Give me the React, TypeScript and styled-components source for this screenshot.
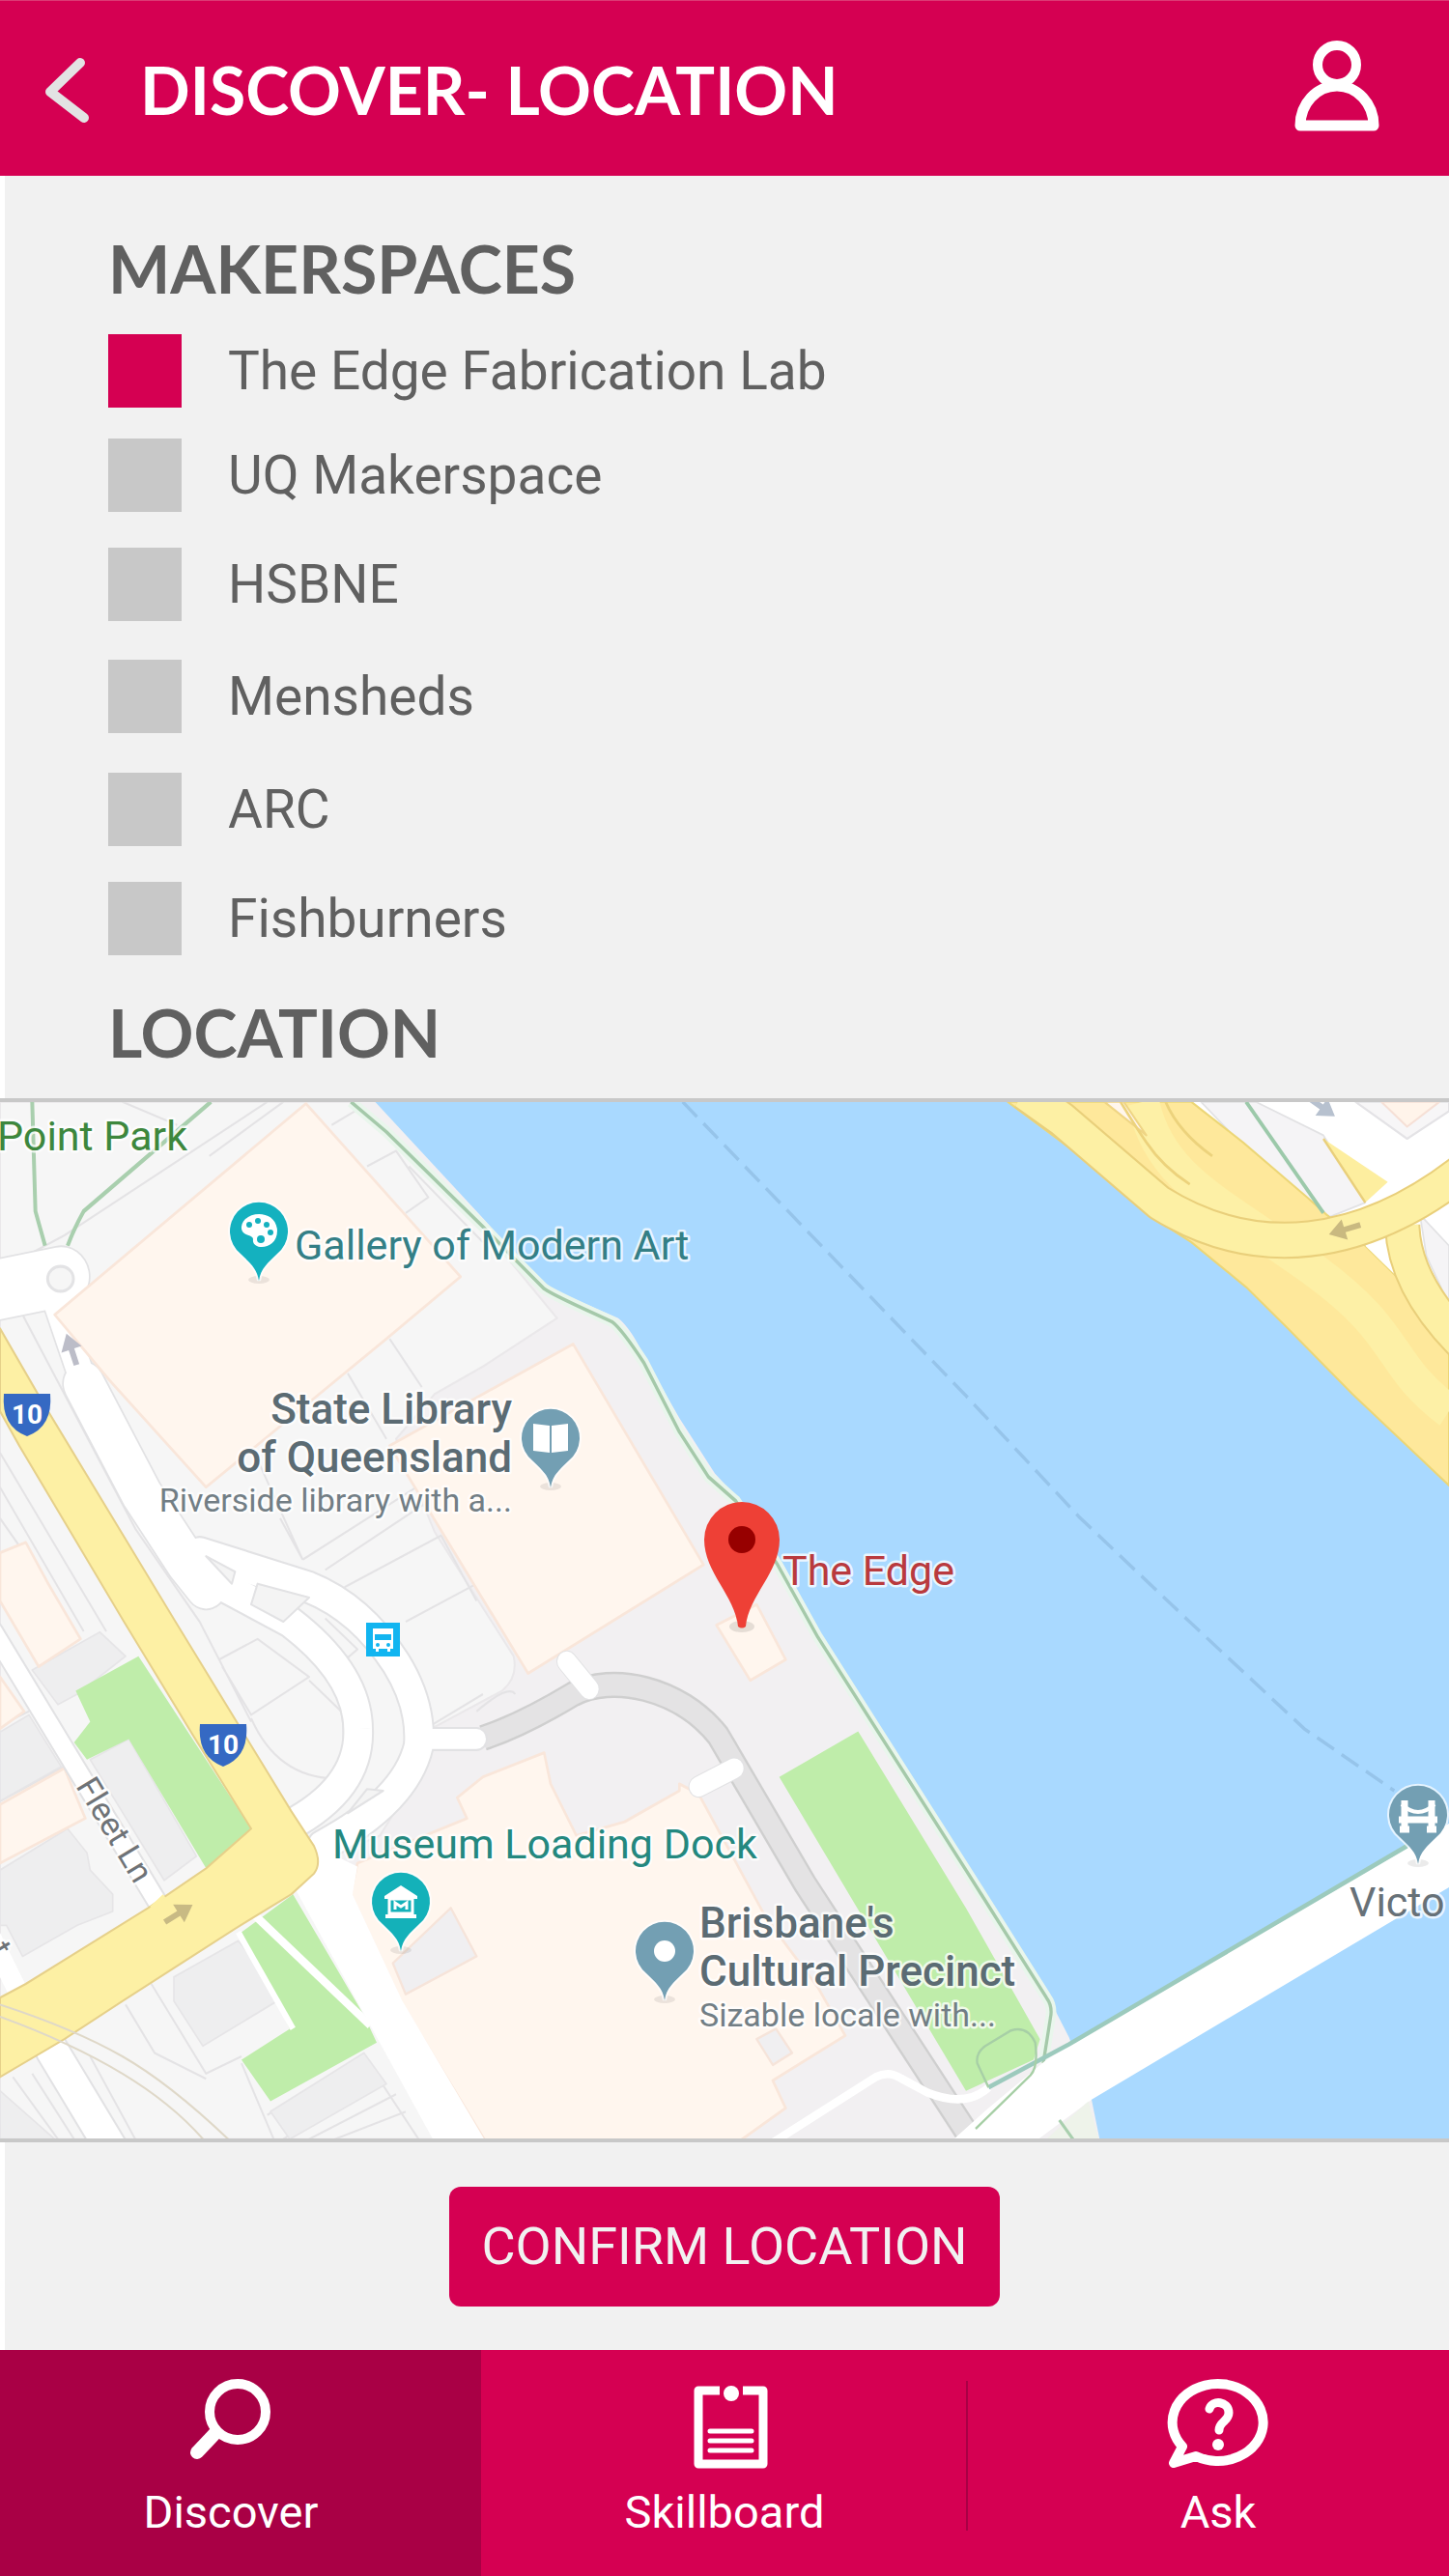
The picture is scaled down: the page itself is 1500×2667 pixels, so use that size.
import React, { useState } from "react";
import styled, { createGlobalStyle } from "styled-components";

const pink = "#d50052";
const darkPink = "#a90045";
const ink = "#606060";
const panel = "#f1f1f1";
const rule = "#c8c8c8";

const GlobalStyle = createGlobalStyle`
  *, *::before, *::after { box-sizing: border-box; }
  body { margin: 0; background: ${panel}; font-family: Roboto, "Liberation Sans", sans-serif; }
`;

const Page = styled.div`
  display: flex;
  flex-direction: column;
  min-height: 100vh;
`;

const Header = styled.header`
  display: flex;
  align-items: center;
  height: 182px;
  padding: 2px 68px 0 38px;
  border-top: 1px solid #dc3a75;
  background: ${pink};
`;

const IconButton = styled.button`
  display: flex;
  padding: 0;
  border: 0;
  background: none;
  cursor: pointer;
`;

const Title = styled.h1`
  flex: 1;
  margin: 0 0 0 43px;
  color: #fff;
  font: 700 68px/80px Lato, "Liberation Sans", sans-serif;
`;

const Section = styled.section`
  border-left: 5px solid #fff;
  background: ${panel};
`;

const Choices = styled(Section)`
  padding: 56px 107px 28px;
`;

const Heading = styled.h2`
  margin: 0;
  color: ${ink};
  font: 700 68px/80px Lato, "Liberation Sans", sans-serif;
`;

const SpaceList = styled.ul`
  display: grid;
  grid-template-rows: 108px 113px 116px 117px 113px 76px;
  align-items: start;
  margin: 28px 0 40px;
  padding: 0;
  list-style: none;
`;

const SpaceLabel = styled.label`
  display: flex;
  align-items: center;
  gap: 48px;
  height: 76px;
  color: ${ink};
  font-size: 55px;
  line-height: 64px;
  cursor: pointer;
`;

const Tick = styled.input`
  appearance: none;
  width: 76px;
  height: 76px;
  margin: 0;
  background: ${rule};
  cursor: pointer;
  &:checked { background: ${pink}; }
`;

const MapFrame = styled.figure`
  margin: 0;
  border: solid ${rule};
  border-width: 4px 0;
  background: #f6f6f6;
  overflow: hidden;
  svg { display: block; width: 100%; height: auto; }
`;

const MapText = styled.text<{ $tone: string; $size?: number; $strong?: boolean }>`
  fill: ${(p) => p.$tone};
  font-family: Roboto, "Liberation Sans", sans-serif;
  font-size: ${(p) => p.$size ?? (p.$strong ? 44 : 43)}px;
  font-weight: ${(p) => (p.$strong ? 500 : 400)};
  stroke: #ffffff;
  stroke-opacity: 0.75;
  stroke-width: 5px;
  stroke-linejoin: round;
  paint-order: stroke;
`;

const ShieldText = styled.text`
  fill: #fff;
  font: 700 28px Roboto, "Liberation Sans", sans-serif;
  text-anchor: middle;
`;

const Actions = styled(Section)`
  display: flex;
  flex: 1;
  justify-content: center;
  align-items: flex-start;
  padding: 46px 5px 44px 0;
`;

const Confirm = styled.button`
  width: 570px;
  height: 124px;
  padding: 0;
  border: 0;
  border-radius: 12px;
  background: ${pink};
  color: ${panel};
  font: 400 54px/64px Roboto, "Liberation Sans", sans-serif;
  cursor: pointer;
`;

const TabBar = styled.nav`
  display: grid;
  grid-template-columns: 498fr 504fr 498fr;
  height: 234px;
  background: ${pink};
`;

const Tab = styled.a<{ $active?: boolean; $side?: "left" | "right" }>`
  position: relative;
  display: flex;
  flex-direction: column;
  align-items: center;
  gap: 12px;
  padding: 24px ${(p) => (p.$side === "left" ? 20 : 0)}px 0 ${(p) => (p.$side === "right" ? 20 : 0)}px;
  background: ${(p) => (p.$active ? darkPink : "transparent")};
  color: #fff;
  font-size: 47px;
  line-height: 56px;
  text-decoration: none;
  &:nth-child(2)::after {
    content: "";
    position: absolute;
    top: 32px;
    right: 0;
    width: 2px;
    height: 155px;
    background: ${darkPink};
  }
`;

const line = { fill: "none", stroke: "#fff", strokeLinecap: "round", strokeLinejoin: "round" } as const;

const BackIcon = () => (
  <svg width="64" height="80" viewBox="0 0 64 80" aria-hidden="true">
    <path d="M45 12 14 42l35 27" {...line} stroke="#e3e3e3" strokeWidth="10" />
  </svg>
);

const UserIcon = () => (
  <svg width="96" height="104" viewBox="0 0 96 104" aria-hidden="true">
    <circle cx="48" cy="26" r="20" {...line} strokeWidth="10" />
    <path d="M10 89A38 41 0 0 1 86 89Z" {...line} strokeWidth="11" />
  </svg>
);

const SearchIcon = () => (
  <svg width="104" height="104" viewBox="0 0 104 104" aria-hidden="true">
    <circle cx="59" cy="40" r="29" {...line} strokeWidth="10" />
    <path d="M35 63 17 82" {...line} strokeWidth="14" />
  </svg>
);

const BoardIcon = () => (
  <svg width="104" height="104" viewBox="0 0 104 104" aria-hidden="true">
    <path d="M47 18H25V94H92V18H71" {...line} strokeLinecap="butt" strokeWidth="9" />
    <circle cx="59" cy="21" r="8" fill="#fff" />
    <path d="M37 60H80M37 70H80M37 80H80" {...line} strokeWidth="5" />
  </svg>
);

const AskIcon = () => (
  <svg width="104" height="104" viewBox="0 0 104 104" overflow="visible" aria-hidden="true">
    <path d="M15 76A47 40 0 1 1 29 86L6 93Z" {...line} strokeWidth="10" />
    <path d="M43 37C46 27 63 29 63 41 63 50 53 50 53 59" {...line} strokeWidth="9" />
    <circle cx="52" cy="74" r="6" fill="#fff" />
  </svg>
);

const Pin = ({ x, y, tone, children }: { x: number; y: number; tone: string; children: React.ReactNode }) => (
  <g transform={`translate(${x} ${y})`}>
    <ellipse cy="50" rx="11" ry="4" fill="#000" opacity=".08" />
    <path
      d="M0 51C-2 38-9 33-19 23A30 30 0 1 1 19 23C9 33 2 38 0 51Z"
      fill={tone}
      stroke="#fff"
      strokeOpacity=".7"
      strokeWidth="4"
      paintOrder="stroke"
    />
    {children}
  </g>
);

const Shield = ({ x, y }: { x: number; y: number }) => (
  <g transform={`translate(${x} ${y})`}>
    <path d="M-24 0H24Q27 34 0 44-27 34-24 0Z" fill="#3569c3" />
    <ShieldText y="31">10</ShieldText>
  </g>
);

const Arrow = ({ x, y, turn, tone }: { x: number; y: number; turn: number; tone: string }) => (
  <path
    d="M-17 0 0-11V-3H17V3H0V11Z"
    fill={tone}
    transform={`translate(${x} ${y}) rotate(${turn})`}
  />
);

const COAST =
  "M1090 33 1200 120 1500 395 1605 495 1690 575Q1720 595 1900 670 1930 690 2000 790L2110 990 2200 1120 2285 1190 2415 1375 2540 1585 3000 2260 3250 2630Q3270 2655 3262 2690L3240 2820";

const HIGHWAY =
  "M3130 33 3370 200 3600 380 3700 440 3870 570 4000 690 4200 880 4500 1145V740L4360 560 4240 450 4120 360 4060 310 3860 150 3700 33Z";

const YELLOW_ROAD =
  "M0 690 130 900 545 1540 905 2090 975 2190Q1000 2240 975 2270L905 2330 730 2430 380 2640 200 2750 0 2860V2630L80 2590 460 2370 640 2255 780 2140 600 1870 385 1540 60 1030 0 930Z";

const Ground = () => (
  <g transform="translate(0 -12) scale(.33333 .35714)" fill="none" strokeLinejoin="round">
    <path d="M0 33H4500V3040H0Z" fill="#f2f0f2" />
    <path
      d="M0 33H1100L1500 400 1730 660 1500 800 1350 880 1230 1010 1350 1280 1595 1640Q1610 1700 1560 1740L1340 1850V1920L1180 2160 1000 2230 1350 3040H0Z"
      fill="#f6f6f6"
      stroke="#eae8ea"
      strokeWidth="6"
    />
    {/* river */}
    <path
      d="M1165 33 1500 370 1615 490 1700 570 1920 660Q1960 690 2000 770L2110 950 2220 1110 2310 1200 2430 1370 2550 1575 3005 2255 3262 2640 3320 2745 3390 2925 3415 3040H4500V33Z"
      fill="#a9d9ff"
    />
    <path d="M2120 33 3000 885 3350 1235 3700 1545 4050 1850 4330 2030" stroke="#96c4ea" strokeWidth="10" strokeDasharray="62 28" />
    {/* parcel boundaries */}
    <path
      d="M380 33 550 100M0 520 200 420 830 33M650 190 880 33M1140 220 1230 175 1330 310 1260 355M1030 100 1120 50M1270 220 1500 440M1210 720 1310 860M1080 820 1200 1010M790 1050 940 1360M940 1360 1310 1140M1010 1390 1380 1160M1070 1440 1370 1290 1480 1480M870 1240 940 1360M1260 1540 1500 1420M70 650 420 1270 620 1540 780 1830M0 1050 330 1568M0 1150 260 1568M0 1240 180 1480M0 1840 90 1800M0 2060 200 1960M680 1650 800 1590 960 1700 780 1810 690 1670M780 1820Q860 1990 1040 1995 1080 1900 1060 1800L960 1710M900 1550 1060 1660 1110 1620 1010 1530M800 1430 780 1490 900 1568M470 2590 640 2850 750 2800M390 2650 480 2790 640 2865M40 2860 180 3040M100 2850 230 3040M280 2800 420 3040M750 2820 850 3040M830 2970 1130 2800 1300 3040M880 3040 1180 2860M960 3040 1230 2910M1040 3040 1260 2960M1600 1750Q1580 1720 1480 1800M1340 1840 1500 1750"
      stroke="#e4e3e5"
      strokeWidth="6"
    />
    {/* grey buildings */}
    <path
      d="M100 1680 310 1570 390 1640 240 1750 180 1780ZM0 1860 90 1810 190 1960 0 2060ZM0 2260 210 2140 270 2210 280 2260 350 2330 350 2380 240 2420 70 2510 20 2420 0 2420ZM280 1940 400 1880 610 2220 510 2290ZM540 2570 740 2465 850 2590 860 2640 630 2770 540 2640ZM0 2900 170 3040H0ZM840 2960 1130 2790 1200 2880 900 3040Z"
      fill="#eeeeef"
      stroke="#e6e5e7"
      strokeWidth="5"
    />
    {/* peach buildings */}
    <path
      d="M1780 735 2185 1375 1640 1690 1210 1030 1500 880ZM2225 1550 2330 1710 2440 1650 2350 1490ZM0 1340 80 1310 150 1430 250 1590 120 1670 0 1480ZM0 1700 75 1800 0 1850ZM0 2070 200 1965 265 2110 0 2240ZM1420 2050 1500 1990 1690 1920 1710 2010 1790 2160 1940 2120 2110 2030 2110 2010 2170 2040 2380 2400 2540 2600 2625 2740 2400 2870 2440 2950 2290 3050H1510L1250 2650 1090 2330 1110 2240 1450 2110Z"
      fill="#fff6ee"
      stroke="#f9e6da"
      strokeWidth="8"
    />
    <path d="M1220 2530 1400 2370 1480 2510 1260 2620ZM2350 2750 2410 2720 2460 2790 2400 2825Z" fill="#f0eff1" stroke="#f6e4da" strokeWidth="7" />
    {/* parks */}
    <path
      d="M235 1740 430 1640 780 2140 640 2255 400 1880 270 1940 230 1890 280 1830ZM750 2440 910 2330 1130 2680 1170 2760 840 2930 750 2810 900 2720ZM2420 1990 2665 1858 3000 2370 3230 2750 3210 2810 3000 2900Z"
      fill="#bfedaa"
    />
    <path d="M740 2440 910 2720" stroke="#fff" strokeWidth="18" />
    <path d="M790 2390 1150 2710" stroke="#fff" strokeWidth="24" />
    {/* riverside walk */}
    <path d={COAST} stroke="#e9f6ec" strokeWidth="32" />
    <path d={COAST} stroke="#a5c9aa" strokeWidth="10" />
    <path d="M100 33 110 350 140 450M655 33 260 350Q230 400 210 450" stroke="#a9cfae" strokeWidth="12" />
    {/* service road */}
    <path d="M1500 1877Q1620 1840 1780 1750C1900 1690 2110 1730 2230 1870L2500 2300 3030 3060" stroke="#cfcfcf" strokeWidth="76" />
    <path d="M1500 1877Q1620 1840 1780 1750C1900 1690 2110 1730 2230 1870L2500 2300 3030 3060" stroke="#e4e3e4" strokeWidth="62" />
    {/* local streets */}
    <g stroke="#e2e2e4" strokeLinecap="round">
      <path d="M-20 580 190 540" strokeWidth="182" />
      <path d="M170 600 250 820" strokeWidth="90" />
      <path d="M260 850 440 1170 580 1370 640 1440" strokeWidth="134" />
      <path d="M620 1400 900 1540Q1110 1690 1112 1850 1120 2020 900 2130" strokeWidth="98" />
      <path d="M620 1340 960 1440Q1120 1500 1230 1660 1310 1780 1300 1900 1260 2060 1000 2190" strokeWidth="98" />
      <path d="M1320 1880H1480" strokeWidth="70" />
      <path d="M-20 1570 500 2370" strokeWidth="66" />
      <path d="M1760 1655 1830 1735M2170 2018 2280 1965" strokeWidth="64" />
      <path d="M160 2780 360 3090" strokeWidth="108" />
    </g>
    <g stroke="#fff" strokeLinecap="round">
      <path d="M-20 580 190 540" strokeWidth="172" />
      <path d="M170 600 250 820" strokeWidth="80" />
      <path d="M260 850 440 1170 580 1370 640 1440" strokeWidth="124" />
      <path d="M620 1400 900 1540Q1110 1690 1112 1850 1120 2020 900 2130" strokeWidth="86" />
      <path d="M620 1340 960 1440Q1120 1500 1230 1660 1310 1780 1300 1900 1260 2060 1000 2190" strokeWidth="86" />
      <path d="M1320 1880H1480" strokeWidth="58" />
      <path d="M-20 1570 500 2370" strokeWidth="54" />
      <path d="M1760 1655 1830 1735M2170 2018 2280 1965" strokeWidth="58" />
      <path d="M160 2780 360 3090" strokeWidth="96" />
      <path d="M-40 2430 60 2620" strokeWidth="60" />
    </g>
    <path d="M950 38 1430 540 1200 720 640 1150 340 840 170 650Z" fill="#fff6ee" stroke="#f9e6da" strokeWidth="8" />
    <path d="M640 1350 730 1395 720 1430ZM800 1430 960 1470 880 1540 780 1490ZM1140 2025 1190 2030 1080 2095Z" fill="#f4f4f4" stroke="#e2e2e4" strokeWidth="6" />
    <ellipse cx="188" cy="546" rx="40" ry="36" fill="#f6f6f6" stroke="#e3e3e5" strokeWidth="9" />
    <path d="M920 2320 1000 2200 1110 2250 1095 2330 1250 2640 1510 3050H1350Z" fill="#fff" />
    <path d={YELLOW_ROAD} fill="#fdf0a4" stroke="#e6d08a" strokeWidth="6" />
    <path d="M470 2370 510 2335" stroke="#fdf0a4" strokeWidth="12" />
    <path d="M0 2650Q230 2720 380 2800T720 3050M0 2685Q220 2760 380 2850T640 3050" stroke="#dfd8c8" strokeWidth="6" />
    {/* bridge and quay */}
    <path d="M2400 3050 2720 2860Q2760 2840 2800 2865L2880 2905Q3000 2950 3070 2890" stroke="#fff" strokeWidth="24" />
    <path d="M2950 3050 3070 2950 3250 2810 3320 2770 4500 2125V2310L3390 2925 3210 3050Z" fill="#fff" />
    <path d="M3070 2890 3320 2765 4370 2190" stroke="#9ccabd" strokeWidth="13" />
    <path d="M3070 2890 3035 2820Q3030 2790 3060 2770L3140 2725Q3190 2710 3215 2760 3225 2830 3200 2855L3030 3010" stroke="#a7cfa6" strokeWidth="7" />
    <path d="M3250 3040 3380 2930 3415 3050Z" fill="#eef3ea" />
    <path d="M3290 2985 3340 3050" stroke="#a9cfae" strokeWidth="9" />
    {/* expressway */}
    <path d="M3690 33H4500V840L4360 560 4240 420 4100 350Z" fill="#fff" />
    <path d="M3730 33H3900L4110 130 4240 325 4120 370 3860 160ZM4410 360 4500 450V620L4430 480Z" fill="#f5f4f6" stroke="#e2e2e4" strokeWidth="5" />
    <path d="M4210 33 4370 140 4500 60V33Z" fill="#f7f6f7" stroke="#e4e3e6" strokeWidth="6" />
    <path d="M4290 33 4370 105 4470 33Z" fill="#fff4ea" stroke="#f6e0d6" strokeWidth="6" />
    <path d={HIGHWAY} fill="#fee89b" stroke="#ecd677" strokeWidth="6" />
    <path d="M3550 33C3600 260 3800 330 4080 520S4300 790 4500 930" stroke="#fdf0a6" strokeWidth="100" />
    <path d="M3430 33 3560 130 3490 33Z" fill="#fff6ec" stroke="#efd585" strokeWidth="6" />
    <path d="M3480 33Q3530 110 3560 150 3610 220 3695 272M3620 33Q3660 120 3765 190" stroke="#ecd27c" strokeWidth="8" />
    <path d="M4110 140 4310 265 4240 325Z" fill="#fdee9f" />
    <path d="M4110 140 4240 325" stroke="#e9cf7b" strokeWidth="7" />
    <path d="M3870 33 4110 355" stroke="#9cc9aa" strokeWidth="11" />
    <path d="M4240 450 4300 415 4350 550Z" fill="#fff" />
    <path d="M4355 390Q4360 560 4540 730" stroke="#e9cf7b" strokeWidth="112" />
    <path d="M4355 390Q4360 560 4540 730" stroke="#fdf0a4" strokeWidth="100" />
    <path d="M3180 5 3300 85 3600 325C3900 500 4230 460 4540 235" stroke="#e9cf7b" strokeWidth="108" />
    <path d="M3180 5 3300 85 3600 325C3900 500 4230 460 4540 235" stroke="#fdf0a4" strokeWidth="96" />
  </g>
);

const LocationMap = () => (
  <svg viewBox="0 0 1500 1073" role="img" aria-label="Map around The Edge, Brisbane">
    <Ground />
    <Arrow x={74} y={256} turn={72} tone="#bcbdc8" />
    <Arrow x={1392} y={132} turn={-17} tone="#c9b980" />
    <Arrow x={185} y={840} turn={148} tone="#c8ba84" />
    <Arrow x={1368} y={5} turn={215} tone="#b7c1cf" />
    <Shield x={28} y={302} />
    <Shield x={231} y={644} />

    <g transform="translate(379 539)">
      <rect width="35" height="35" fill="#12b5f0" />
      <path d="M7 6H28V27H25V30H22V27H13V30H10V27H7Z" fill="#fff" />
      <path d="M9 12H26V18H9Z" fill="#12b5f0" />
      <circle cx="12" cy="23" r="2" fill="#12b5f0" />
      <circle cx="23" cy="23" r="2" fill="#12b5f0" />
    </g>

    <Pin x={268} y={134} tone="#14b1bf">
      <path d="M-18-5C-16-22 18-24 19-1 19 20-8 20-6 8-6 3-19 5-18-5Z" fill="#fff" />
      <g fill="#14b1bf">
        <circle cx="-10" cy="-7" r="3" />
        <circle cx="-1" cy="-11" r="3" />
        <circle cx="8" cy="-7" r="3" />
        <circle cx="12" cy="1" r="3" />
        <circle cx="2" cy="8" r="4" />
      </g>
    </Pin>
    <Pin x={570} y={348} tone="#739fb3">
      <path d="M-18-15-1-13V15L-18 13ZM18-15 1-13V15L18 13Z" fill="#fff" />
    </Pin>
    <Pin x={415} y={828} tone="#14b1b9">
      <path d="M-17-6 0-17 17-6V-3H-17ZM-16 13H16V17H-16Z" fill="#fff" />
      <path d="M-12-3H12V12H-12ZM-6 8V1L0 5 6 1V8" fill="none" stroke="#fff" strokeWidth="3" />
    </Pin>
    <Pin x={688} y={879} tone="#739fb3">
      <circle r="11" fill="#fff" />
    </Pin>
    <Pin x={1468} y={738} tone="#739fb3">
      <path d="M-14-15V16M14-15V16M-20 5H20M-19 15H-9M9 15H19" stroke="#fff" strokeWidth="7" />
      <path d="M-17-11Q0 5 17-11" fill="none" stroke="#fff" strokeWidth="4" />
    </Pin>
    <g transform="translate(768 453)">
      <ellipse cy="90" rx="13" ry="6" fill="#000" opacity=".1" />
      <path d="M-4 90C-7 58-39 34-39 0A39 39 0 1 1 39 0C39 34 7 58 4 90Q0 93-4 90Z" fill="#ee4036" />
      <circle r="14" fill="#970000" />
    </g>

    <MapText x={-3} y={50} $tone="#3d873d">Point Park</MapText>
    <MapText x={305} y={163} $tone="#347f86">Gallery of Modern Art</MapText>
    <MapText x={530} y={333} $tone="#5b6b73" $strong textAnchor="end">State Library</MapText>
    <MapText x={530} y={383} $tone="#5b6b73" $strong textAnchor="end">of Queensland</MapText>
    <MapText x={530} y={424} $tone="#727e85" $size={34} textAnchor="end">Riverside library with a...</MapText>
    <MapText x={810} y={500} $tone="#b93a3e">The Edge</MapText>
    <MapText x={344} y={783} $tone="#24887f">Museum Loading Dock</MapText>
    <MapText x={724} y={865} $tone="#5b6b73" $strong>Brisbane's</MapText>
    <MapText x={724} y={915} $tone="#5b6b73" $strong>Cultural Precinct</MapText>
    <MapText x={724} y={957} $tone="#727e85" $size={34}>Sizable locale with...</MapText>
    <MapText x={1397} y={843} $tone="#677178">Victo</MapText>
    <MapText $tone="#6f7377" $size={34} transform="translate(78 708) rotate(59)">Fleet Ln</MapText>
    <MapText $tone="#6f7377" $size={34} transform="translate(-12 878) rotate(59)">t</MapText>
  </svg>
);

const SPACES = ["The Edge Fabrication Lab", "UQ Makerspace", "HSBNE", "Mensheds", "ARC", "Fishburners"];

export default function App() {
  const [chosen, setChosen] = useState<string[]>([SPACES[0]]);
  const toggle = (name: string) =>
    setChosen((now) => (now.includes(name) ? now.filter((n) => n !== name) : [...now, name]));

  return (
    <Page>
      <GlobalStyle />
      <Header>
        <IconButton type="button" aria-label="Back">
          <BackIcon />
        </IconButton>
        <Title>DISCOVER- LOCATION</Title>
        <IconButton type="button" aria-label="Profile">
          <UserIcon />
        </IconButton>
      </Header>

      <Choices>
        <Heading>MAKERSPACES</Heading>
        <SpaceList>
          {SPACES.map((name) => (
            <li key={name}>
              <SpaceLabel>
                <Tick type="checkbox" checked={chosen.includes(name)} onChange={() => toggle(name)} />
                {name}
              </SpaceLabel>
            </li>
          ))}
        </SpaceList>
        <Heading>LOCATION</Heading>
      </Choices>

      <MapFrame>
        <LocationMap />
      </MapFrame>

      <Actions>
        <Confirm type="button">CONFIRM LOCATION</Confirm>
      </Actions>

      <TabBar>
        <Tab href="#discover" $active $side="left" aria-current="page">
          <SearchIcon />
          Discover
        </Tab>
        <Tab href="#skillboard">
          <BoardIcon />
          Skillboard
        </Tab>
        <Tab href="#ask" $side="right">
          <AskIcon />
          Ask
        </Tab>
      </TabBar>
    </Page>
  );
}
